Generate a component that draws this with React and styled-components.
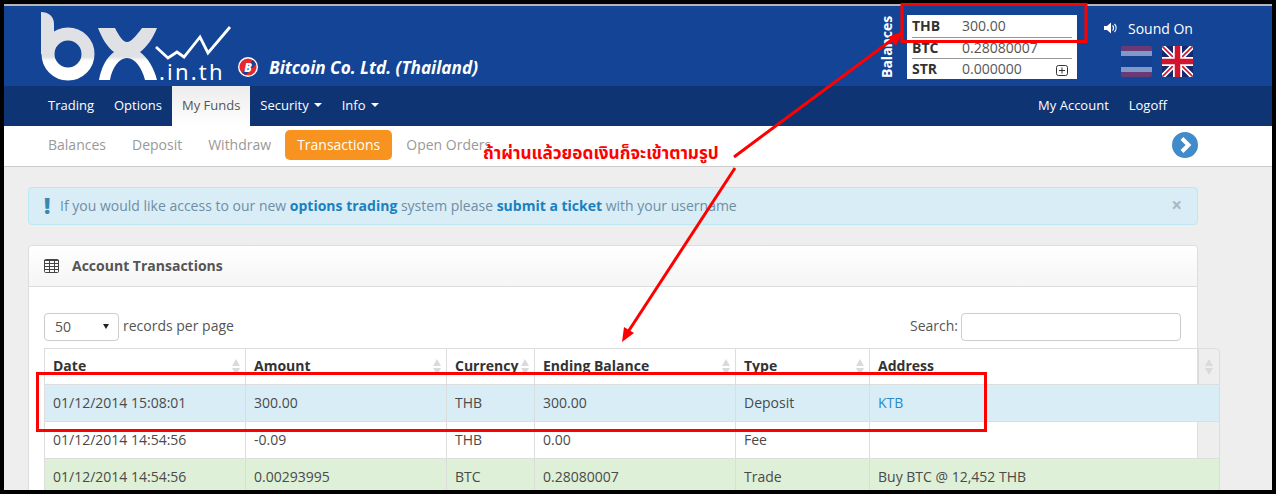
import React from 'react';
import styled, { createGlobalStyle } from 'styled-components';

const GlobalStyle = createGlobalStyle`
  html, body {
    margin: 0;
    padding: 0;
    background: #000;
  }
  * {
    box-sizing: border-box;
  }
`;

const Screen = styled.div`
  position: relative;
  width: 1276px;
  height: 494px;
  overflow: hidden;
  background: #000;
  padding: 4px 4px 4px;
  font-family: 'Open Sans', 'Noto Sans', sans-serif;
  font-size: 14px;
  color: #333;
`;

const Page = styled.div`
  height: 486px;
  overflow: hidden;
  background: #eee;
  border-top: 2px solid #b5b5b5;
`;

const Header = styled.header`
  height: 80px;
  background: #134495;
  display: flex;
  color: #fff;
`;

const LogoMark = styled.svg`
  flex: none;
  width: 200px;
  height: 80px;
  margin-left: 32px;
`;

const Company = styled.div`
  display: flex;
  align-items: center;
  gap: 11px;
  margin: 51px 0 0 2px;
  height: 20px;
`;

const CompanyName = styled.span`
  font-size: 17.2px;
  font-weight: 700;
  font-style: italic;
  white-space: nowrap;
`;

const BalanceArea = styled.div`
  display: flex;
  margin-left: auto;
  padding-top: 9px;
`;

const BalanceLabel = styled.div`
  writing-mode: vertical-rl;
  transform: rotate(180deg);
  height: 63px;
  width: 14px;
  margin-right: 13px;
  font-size: 14px;
  line-height: 14px;
  font-weight: 700;
  text-align: left;
`;

const BalanceBox = styled.div`
  position: relative;
  width: 170px;
  height: 64px;
  background: #fff;
  padding: 0 5px;
  color: #333;
`;

const BalanceRow = styled.div`
  display: flex;
  align-items: center;
  height: ${(p) => p.$height}px;
  line-height: 20px;
  border-bottom: ${(p) => (p.$last ? '0' : '1px solid #999')};
`;

const BalanceCode = styled.b`
  width: 50px;
  font-size: 14px;
`;

const BalanceValue = styled.span`
  font-size: 14px;
  color: #555;
`;

const PlusIcon = styled.svg`
  position: absolute;
  right: 9px;
  bottom: 3px;
`;

const SoundArea = styled.div`
  width: 195px;
  padding: 12px 0 0 26px;
  display: flex;
  flex-direction: column;
`;

const SoundRow = styled.div`
  display: flex;
  align-items: center;
  gap: 10px;
  height: 20px;
  font-size: 14px;
`;

const SoundGlyph = styled.svg`
  margin-left: 1px;
`;

const Flags = styled.div`
  display: flex;
  gap: 10px;
  margin: 8px 0 0 18px;
`;

const FlagIcon = styled.svg`
  display: block;
  border-radius: 2px;
`;

const MainNav = styled.nav`
  height: 40px;
  background: #0e3474;
  display: flex;
  padding-left: 34px;
  padding-right: 95px;
`;

const NavLink = styled.a`
  display: flex;
  align-items: center;
  gap: 5px;
  height: 40px;
  padding: 0 10px 2px;
  font-size: 13px;
  color: ${(p) => (p.$active ? '#555' : '#fff')};
  background: ${(p) => (p.$active ? 'linear-gradient(#ececec, #fff)' : 'transparent')};
  margin-left: ${(p) => (p.$push ? 'auto' : '0')};
`;

const Caret = styled.i`
  width: 0;
  height: 0;
  border-left: 4px solid transparent;
  border-right: 4px solid transparent;
  border-top: 4px solid #fff;
`;

const SubNav = styled.nav`
  height: 41px;
  background: #fff;
  border-bottom: 1px solid #ccc;
  display: flex;
  align-items: center;
  padding: 0 74px 2px 44px;
`;

const SubLink = styled.a`
  font-size: 14px;
  line-height: 30px;
  height: 30px;
  border-radius: 5px;
  color: ${(p) => (p.$active ? '#fff' : '#999')};
  background: ${(p) => (p.$active ? '#f7931e' : 'transparent')};
  padding: ${(p) => (p.$active ? '0 12px' : '0')};
  margin-right: ${(p) => (p.$active || p.$tight ? '14px' : '26px')};
`;

const NextButton = styled.svg`
  margin-left: auto;
`;

const Content = styled.main`
  padding: 20px 74px 0 24px;
`;

const Alert = styled.div`
  height: 38px;
  background: #d9edf7;
  border: 1px solid #bce8f1;
  border-radius: 4px;
  display: flex;
  align-items: center;
  padding: 0 15px 2px;
  color: #6f8ea3;
  font-size: 14px;
  white-space: nowrap;
`;

const AlertMark = styled.b`
  width: 16px;
  font-size: 22px;
  line-height: 22px;
  color: #3a87ad;
  font-weight: 800;
`;

const AlertLink = styled.b`
  color: #1a80bf;
`;

const AlertClose = styled.b`
  margin-left: auto;
  font-size: 19px;
  line-height: 19px;
  color: #a9b9c2;
`;

const Panel = styled.section`
  margin-top: 20px;
  background: #fff;
  border: 1px solid #ddd;
  border-radius: 4px;
  height: 300px;
`;

const PanelHeader = styled.div`
  height: 41px;
  display: flex;
  align-items: center;
  gap: 13px;
  padding: 0 15px 1px;
  background: linear-gradient(#fff, #f5f5f5);
  border-bottom: 1px solid #ddd;
  border-radius: 4px 4px 0 0;
  color: #555;
  font-weight: 700;
  font-size: 14px;
`;

const Controls = styled.div`
  display: flex;
  justify-content: space-between;
  align-items: flex-end;
  height: 61px;
  padding: 0 16px 7px 15px;
`;

const ControlGroup = styled.label`
  display: flex;
  align-items: center;
  gap: 3px;
  font-size: 14px;
  color: #555;
`;

const ControlText = styled.span`
  margin-bottom: 3px;
`;

const PageSize = styled.div`
  width: 75px;
  height: 28px;
  border: 1px solid #ccc;
  border-radius: 4px;
  background: #fff;
  display: flex;
  align-items: center;
  justify-content: space-between;
  padding: 0 9px 2px 10px;
  color: #555;
  margin-right: 1px;
`;

const SelectArrow = styled.i`
  width: 0;
  height: 0;
  border-left: 3px solid transparent;
  border-right: 3px solid transparent;
  border-top: 5px solid #222;
`;

const SearchInput = styled.input`
  width: 220px;
  height: 28px;
  border: 1px solid #ccc;
  border-radius: 4px;
  background: #fff;
`;

const Table = styled.table`
  table-layout: fixed;
  width: 1176px;
  margin-left: 15px;
  border-collapse: separate;
  border-spacing: 0;
  font-size: 14px;
`;

const HeadCell = styled.th`
  position: relative;
  height: 37px;
  padding: 7px 8px 9px;
  text-align: left;
  font-weight: 700;
  color: #333;
  white-space: nowrap;
  border-top: 1px solid #ddd;
  border-left: 1px solid #ddd;
  border-bottom: 1px solid #ddd;
  &:last-child {
    border-radius: 0 4px 0 0;
    border-right: 1px solid #ddd;
  }
`;

const SortIcon = styled.svg`
  position: absolute;
  right: ${(p) => p.$right || 4}px;
  top: 9px;
`;

const Row = styled.tr`
  background: ${(p) => p.$tone || 'transparent'};
`;

const Cell = styled.td`
  height: 37px;
  padding: 7px 8px 9px;
  color: #4a4a4a;
  white-space: nowrap;
  border-left: 1px solid #ddd;
  border-bottom: 1px solid #ddd;
  &:last-child {
    border-right: 1px solid #ddd;
  }
`;

const AddressLink = styled.a`
  color: #2a8ac9;
`;

const Annotation = styled.svg`
  position: absolute;
  inset: 0;
  pointer-events: none;
`;

const Note = styled.div`
  position: absolute;
  left: 483px;
  top: 142px;
  font-family: 'Noto Sans Thai', 'Noto Sans', 'DejaVu Sans', sans-serif;
  font-size: 17.2px;
  line-height: 24px;
  font-weight: 700;
  color: #ff0000;
  white-space: nowrap;
`;

const COLUMNS = [
  { title: 'Date', width: 201, sortable: true },
  { title: 'Amount', width: 201, sortable: true },
  { title: 'Currency', width: 88, sortable: true },
  { title: 'Ending Balance', width: 201, sortable: true },
  { title: 'Type', width: 134, sortable: true },
  { title: 'Address', width: 329 },
];

const ROWS = [
  { tone: '#d9edf7', cells: ['01/12/2014 15:08:01', '300.00', 'THB', '300.00', 'Deposit', <AddressLink key="ktb">KTB</AddressLink>] },
  { cells: ['01/12/2014 14:54:56', '-0.09', 'THB', '0.00', 'Fee', ''] },
  { tone: '#dff0d8', cells: ['01/12/2014 14:54:56', '0.00293995', 'BTC', '0.28080007', 'Trade', 'Buy BTC @ 12,452 THB'] },
];

const Logo = () => (
  <LogoMark viewBox="36 6 200 80">
    <defs>
      <linearGradient id="logoShade" gradientUnits="userSpaceOnUse" x1="0" y1="12" x2="0" y2="80">
        <stop offset="0.66" stopColor="#dfe1e5" />
        <stop offset="0.72" stopColor="#fff" />
      </linearGradient>
    </defs>
    <circle cx="68" cy="54" r="20" fill="none" stroke="url(#logoShade)" strokeWidth="13" />
    <path d="M41 12 C48 12 54 16 54 24 V54 H41Z" fill="url(#logoShade)" />
    <path
      d="M98 28 H115 C119 36 123 42 127 42 C131 42 136 36 142 28 H157 C153 38 147 47 140 52 C148 58 154 68 157 80 H145 C142 68 135 58 127 58 C119 58 112 68 110 80 H99 C101 68 106 58 114 52 C107 47 102 38 98 28Z"
      fill="url(#logoShade)"
    />
    <polyline points="156,47 168,58 177,52 184,57 200,37 208,53 230,27" fill="none" stroke="#fff" strokeWidth="2.8" />
    <text x="159" y="80" fill="#fff" fontFamily="'Noto Sans', sans-serif" fontSize="22" letterSpacing="2.2">.in.th</text>
  </LogoMark>
);

const CoinBadge = () => (
  <svg width="20" height="20" viewBox="0 0 20 20">
    <circle cx="10" cy="10" r="10" fill="#fff" />
    <circle cx="10" cy="10" r="8.6" fill="#e8262b" />
    <path d="M15 3 L18 7 L8 18 L4 16Z" fill="#134495" />
    <text x="10" y="14.5" textAnchor="middle" fontFamily="'Open Sans', sans-serif" fontWeight="800" fontStyle="italic" fontSize="12" fill="#fff">B</text>
  </svg>
);

const SoundIcon = () => (
  <SoundGlyph width="14" height="14" viewBox="0 0 14 14">
    <path d="M0 5 H3 L7 1.5 V12.5 L3 9 H0Z" fill="#fff" />
    <path d="M8.5 4.5 A3.5 3.5 0 0 1 8.5 9.5 M10.5 3 A6 6 0 0 1 10.5 11" fill="none" stroke="#fff" strokeWidth="1.2" />
  </SoundGlyph>
);

const ThaiFlag = () => (
  <FlagIcon width="31" height="31" viewBox="0 0 31 31">
    <rect width="31" height="31" fill="#6b3a74" />
    <rect y="5" width="31" height="5" fill="#8199c8" />
    <rect y="10" width="31" height="11" fill="#153f8f" />
    <rect y="21" width="31" height="5" fill="#8199c8" />
  </FlagIcon>
);

const UkFlag = () => (
  <FlagIcon width="31" height="31" viewBox="0 0 31 31">
    <rect width="31" height="31" fill="#16296e" />
    <path d="M0 0 L31 31 M31 0 L0 31" stroke="#fff" strokeWidth="5" />
    <path d="M0 0 L31 31 M31 0 L0 31" stroke="#d2142e" strokeWidth="1.6" />
    <path d="M15.5 0 V31 M0 15.5 H31" stroke="#fff" strokeWidth="9" />
    <path d="M15.5 0 V31 M0 15.5 H31" stroke="#d2142e" strokeWidth="5.5" />
  </FlagIcon>
);

const SortArrows = ({ right }) => (
  <SortIcon $right={right} width="10" height="18" viewBox="0 0 10 18">
    <path d="M5 1 L9 8 H1Z M5 17 L9 10 H1Z" fill="#d8dadc" />
  </SortIcon>
);

const App = () => (
  <>
    <GlobalStyle />
    <Screen>
      <Page>
        <Header>
          <Logo />
          <Company>
            <CoinBadge />
            <CompanyName>Bitcoin Co. Ltd. (Thailand)</CompanyName>
          </Company>
          <BalanceArea>
            <BalanceLabel>Balances</BalanceLabel>
            <BalanceBox>
              <BalanceRow $height={23}>
                <BalanceCode>THB</BalanceCode>
                <BalanceValue>300.00</BalanceValue>
              </BalanceRow>
              <BalanceRow $height={21}>
                <BalanceCode>BTC</BalanceCode>
                <BalanceValue>0.28080007</BalanceValue>
              </BalanceRow>
              <BalanceRow $height={20} $last>
                <BalanceCode>STR</BalanceCode>
                <BalanceValue>0.000000</BalanceValue>
              </BalanceRow>
              <PlusIcon width="12" height="11" viewBox="0 0 12 11">
                <rect x="0.5" y="0.5" width="11" height="10" rx="2" fill="none" stroke="#333" />
                <path d="M6 2.5 V8.5 M3 5.5 H9" stroke="#333" />
              </PlusIcon>
            </BalanceBox>
          </BalanceArea>
          <SoundArea>
            <SoundRow>
              <SoundIcon />
              Sound On
            </SoundRow>
            <Flags>
              <ThaiFlag />
              <UkFlag />
            </Flags>
          </SoundArea>
        </Header>
        <MainNav>
          <NavLink>Trading</NavLink>
          <NavLink>Options</NavLink>
          <NavLink $active>My Funds</NavLink>
          <NavLink>Security <Caret /></NavLink>
          <NavLink>Info <Caret /></NavLink>
          <NavLink $push>My Account</NavLink>
          <NavLink>Logoff</NavLink>
        </MainNav>
        <SubNav>
          <SubLink>Balances</SubLink>
          <SubLink>Deposit</SubLink>
          <SubLink $tight>Withdraw</SubLink>
          <SubLink $active>Transactions</SubLink>
          <SubLink>Open Orders</SubLink>
          <NextButton width="26" height="26" viewBox="0 0 26 26">
            <circle cx="13" cy="13" r="13" fill="#428bca" />
            <path d="M10 6.5 L16.5 13 L10 19.5" fill="none" stroke="#fff" strokeWidth="4" />
          </NextButton>
        </SubNav>
        <Content>
          <Alert>
            <AlertMark>!</AlertMark>
            <span>
              If you would like access to our new <AlertLink>options trading</AlertLink> system please{' '}
              <AlertLink>submit a ticket</AlertLink> with your username
            </span>
            <AlertClose>×</AlertClose>
          </Alert>
          <Panel>
            <PanelHeader>
              <svg width="15" height="14" viewBox="0 0 15 14" fill="none" stroke="#444">
                <rect x="0.5" y="0.5" width="14" height="13" rx="1" />
                <path d="M0 1.5 H15 M0 4.5 H15 M0 7.5 H15 M0 10.5 H15 M5.5 1 V14 M10.5 1 V14" />
              </svg>
              Account Transactions
            </PanelHeader>
            <Controls>
              <ControlGroup>
                <PageSize>
                  50
                  <SelectArrow />
                </PageSize>
                <ControlText>records per page</ControlText>
              </ControlGroup>
              <ControlGroup>
                <ControlText>Search:</ControlText>
                <SearchInput />
              </ControlGroup>
            </Controls>
            <Table>
              <colgroup>
                {COLUMNS.map((c) => <col key={c.title} width={c.width} />)}
                <col />
              </colgroup>
              <thead>
                <tr>
                  {COLUMNS.map((c) => (
                    <HeadCell key={c.title}>
                      {c.title}
                      {c.sortable && <SortArrows />}
                    </HeadCell>
                  ))}
                  <HeadCell>
                    <SortArrows right={5} />
                  </HeadCell>
                </tr>
              </thead>
              <tbody>
                {ROWS.map((r) => (
                  <Row key={r.cells[0] + r.cells[1]} $tone={r.tone}>
                    {r.cells.map((value, i) => (
                      <Cell key={COLUMNS[i].title} colSpan={i === 5 ? 2 : 1}>{value}</Cell>
                    ))}
                  </Row>
                ))}
              </tbody>
            </Table>
          </Panel>
        </Content>
      </Page>
      <Annotation width="1276" height="494" viewBox="0 0 1276 494">
        <g fill="none" stroke="#ff0000" strokeWidth="3">
          <rect x="902" y="4.5" width="184" height="37" />
          <rect x="37.5" y="373.5" width="948" height="57" />
          <path d="M734 157 L897 36" />
          <path d="M735 168 L626 335" />
        </g>
        <path d="M903 31 L888 37 L896 46Z M622 342 L624 327 L634 333Z" fill="#ff0000" />
      </Annotation>
      <Note>ถ้าผ่านแล้วยอดเงินก็จะเข้าตามรูป</Note>
    </Screen>
  </>
);

export default App;
